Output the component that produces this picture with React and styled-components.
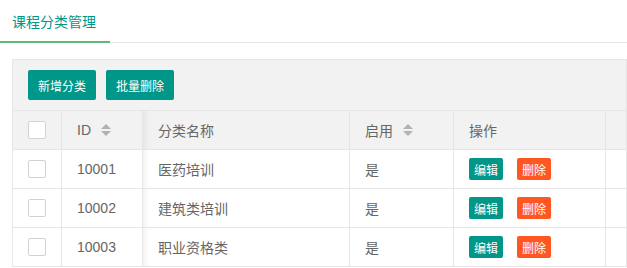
import React from 'react';
import styled, { createGlobalStyle } from 'styled-components';

const GlobalStyle = createGlobalStyle`
  html, body {
    margin: 0;
    padding: 0;
    background: #fff;
  }
  body {
    font-family: "Liberation Sans", "Noto Sans CJK SC", sans-serif;
    font-size: 14px;
    color: #666;
  }
`;

const TabBar = styled.div`
  display: flex;
  align-items: flex-start;
  height: 42px;
  border-bottom: 1px solid #e6e6e6;
`;

const TabItem = styled.div`
  box-sizing: border-box;
  width: 110px;
  height: 43px;
  padding: 1px 0 0 12px;
  display: flex;
  align-items: center;
  color: #009688;
  font-size: 14px;
  border-bottom: 2px solid #5fb878;
`;

const Content = styled.div`
  padding: 16px 0 0 12px;
`;

const TableBox = styled.div`
  box-sizing: border-box;
  width: 615px;
  border: 1px solid #e6e6e6;
  border-bottom: none;
`;

const Toolbar = styled.div`
  box-sizing: border-box;
  height: 51px;
  padding: 10px 15px;
  display: flex;
  gap: 10px;
  background: #f2f2f2;
  border-bottom: 1px solid #e6e6e6;
`;

const Button = styled.button`
  display: inline-flex;
  align-items: center;
  justify-content: center;
  height: ${p => (p.$size === 'xs' ? '22px' : '30px')};
  padding: ${p => (p.$size === 'xs' ? '0 5px' : '0 10px')};
  border: none;
  border-radius: 2px;
  background: ${p => (p.$danger ? '#ff5722' : '#009688')};
  color: #fff;
  font-family: inherit;
  font-size: 12px;
  cursor: pointer;
`;

const Row = styled.div`
  display: grid;
  grid-template-columns: 49px 81px 207px 104px 152px 1fr;
  box-sizing: border-box;
  height: 39px;
  border-bottom: 1px solid #e6e6e6;
  background: ${p => (p.$head ? '#f2f2f2' : '#fff')};
`;

const Cell = styled.div`
  box-sizing: border-box;
  display: flex;
  align-items: center;
  gap: 14px;
  padding: 0 15px;
  border-right: ${p => (p.$last ? 'none' : '1px solid #e6e6e6')};
  box-shadow: ${p => (p.$shadow ? 'inset 8px 0 8px -8px rgba(0, 0, 0, 0.1)' : 'none')};
  color: #666;
  font-size: 14px;
  white-space: nowrap;
`;

const CheckBox = styled.span`
  box-sizing: border-box;
  width: 18px;
  height: 18px;
  border: 1px solid #d2d2d2;
  border-radius: 2px;
  background: #fff;
`;

const SortIcon = styled.svg`
  margin-left: 10px;
  flex: none;
`;

const HeadLabel = styled.span`
  display: inline-flex;
  align-items: center;
`;

const Sort = () => (
  <SortIcon width="10" height="12" viewBox="0 0 10 12">
    <polygon points="5,0 10,5 0,5" fill="#b2b2b2" />
    <polygon points="0,7 10,7 5,12" fill="#b2b2b2" />
  </SortIcon>
);

const rows = [
  { id: '10001', name: '医药培训', enabled: '是' },
  { id: '10002', name: '建筑类培训', enabled: '是' },
  { id: '10003', name: '职业资格类', enabled: '是' },
];

const App = () => (
  <>
    <GlobalStyle />
    <TabBar>
      <TabItem>课程分类管理</TabItem>
    </TabBar>
    <Content>
      <TableBox>
        <Toolbar>
          <Button>新增分类</Button>
          <Button>批量删除</Button>
        </Toolbar>
        <Row $head>
          <Cell><CheckBox /></Cell>
          <Cell><HeadLabel>ID<Sort /></HeadLabel></Cell>
          <Cell $shadow>分类名称</Cell>
          <Cell><HeadLabel>启用<Sort /></HeadLabel></Cell>
          <Cell>操作</Cell>
          <Cell $last />
        </Row>
        {rows.map(r => (
          <Row key={r.id}>
            <Cell><CheckBox /></Cell>
            <Cell>{r.id}</Cell>
            <Cell $shadow>{r.name}</Cell>
            <Cell>{r.enabled}</Cell>
            <Cell>
              <Button $size="xs">编辑</Button>
              <Button $size="xs" $danger>删除</Button>
            </Cell>
            <Cell $last />
          </Row>
        ))}
      </TableBox>
    </Content>
  </>
);

export default App;
